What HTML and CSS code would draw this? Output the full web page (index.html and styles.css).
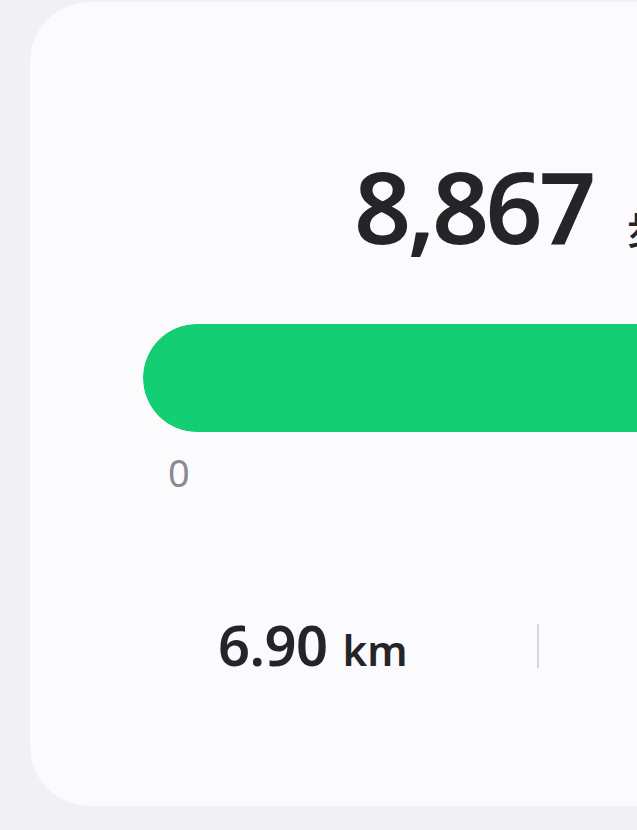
FILE: index.html
```html
<!DOCTYPE html>
<html lang="zh">
<head>
    <meta charset="UTF-8">
    <meta name="viewport" content="width=device-width, initial-scale=1.0">
    <title>步数</title>
    <link rel="stylesheet" href="styles.css">
</head>
<body>
    <div class="card">
        <div class="steps">
            <span class="steps-count">8,867</span>
            <span class="steps-unit">步</span>
        </div>
        <div class="progress">
            <div class="progress-fill"></div>
        </div>
        <div class="scale">
            <span class="scale-min">0</span>
        </div>
        <div class="stats">
            <div class="stat">
                <span class="stat-value">6.90</span>
                <span class="stat-unit">km</span>
            </div>
            <div class="stat-divider"></div>
        </div>
    </div>
</body>
</html>
```

FILE: styles.css
```css
body {
    margin: 0;
    background-color: #f1f1f3;
    font-family: "Noto Sans", "Noto Sans CJK SC", sans-serif;
    color: #252528;
    overflow: hidden;
    height: 830px;
}

.card {
    margin-top: 2px;
    margin-left: 30px;
    width: 1180px;
    height: 804px;
    box-sizing: border-box;
    padding: 153px 0 0 113px;
    background: #fbfbfd;
    border-radius: 60px;
}

.steps {
    display: flex;
    align-items: baseline;
    gap: 34px;
    padding-left: 211px;
    line-height: 1;
}

.steps-count {
    font-size: 100px;
    font-weight: 600;
    letter-spacing: -3.6px;
}

.steps-unit {
    font-size: 40px;
    font-weight: 500;
}

.progress {
    margin-top: 69px;
    width: 960px;
    height: 108px;
    border-radius: 54px;
    background: #e6e7ea;
    overflow: hidden;
}

.progress-fill {
    width: 100%;
    height: 100%;
    border-radius: 54px;
    background: #13ce72;
}

.scale {
    margin-top: 21px;
    padding-left: 25px;
    line-height: 1;
}

.scale-min {
    font-size: 38px;
    color: #8b8b8e;
}

.stats {
    display: flex;
    align-items: center;
    margin-top: 125px;
    padding-left: 75px;
    line-height: 1;
}

.stat {
    display: flex;
    align-items: baseline;
    gap: 15px;
    width: 319px;
}

.stat-value {
    font-size: 56px;
    font-weight: 600;
    letter-spacing: -0.5px;
}

.stat-unit {
    font-size: 42px;
    font-weight: 600;
}

.stat-divider {
    width: 2px;
    height: 44px;
    margin-top: 4px;
    background: #d5d5d9;
}
```
